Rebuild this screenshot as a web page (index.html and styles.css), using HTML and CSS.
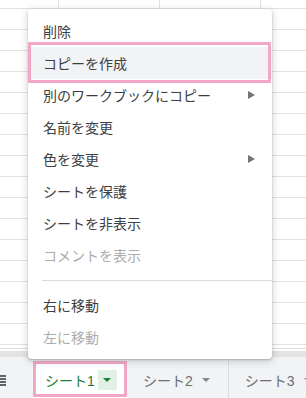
FILE: index.html
```html
<!DOCTYPE html>
<html lang="ja">
<head>
    <meta charset="UTF-8">
    <meta name="viewport" content="width=device-width, initial-scale=1.0">
    <title>シートのメニュー</title>
    <link rel="stylesheet" href="styles.css">
</head>
<body>
    <div class="screen">
        <div class="sheet-grid"></div>
        <div class="scroll-track"></div>

        <div class="tab-bar">
            <div class="all-sheets">
                <svg width="6" height="12" viewBox="0 0 6 12">
                    <rect x="0" y="0" width="6" height="2" fill="#5f6368"/>
                    <rect x="0" y="3" width="6" height="2" fill="#5f6368"/>
                    <rect x="0" y="6" width="6" height="2" fill="#5f6368"/>
                    <rect x="0" y="9" width="6" height="2" fill="#5f6368"/>
                </svg>
            </div>
            <div class="tab active">
                <span class="tab-name">シート1</span>
                <span class="tab-arrow"><span class="caret"></span></span>
                <span class="mark"></span>
            </div>
            <div class="tab">
                <span class="tab-name">シート2</span>
                <span class="tab-arrow"><span class="caret"></span></span>
            </div>
            <div class="tab">
                <span class="tab-name">シート3</span>
                <span class="tab-arrow"><span class="caret"></span></span>
            </div>
        </div>

        <div class="menu">
            <div class="menu-item">削除</div>
            <div class="menu-item hover">コピーを作成<span class="mark"></span></div>
            <div class="menu-item">別のワークブックにコピー<span class="sub"></span></div>
            <div class="menu-item">名前を変更</div>
            <div class="menu-item">色を変更<span class="sub"></span></div>
            <div class="menu-item">シートを保護</div>
            <div class="menu-item">シートを非表示</div>
            <div class="menu-item disabled">コメントを表示</div>
            <div class="menu-sep"></div>
            <div class="menu-item">右に移動</div>
            <div class="menu-item disabled">左に移動</div>
        </div>
    </div>
</body>
</html>
```

FILE: styles.css
```css
body {
    margin: 0;
    font-family: "Liberation Sans", "Noto Sans CJK JP", sans-serif;
}
.screen {
    position: relative;
    width: 306px;
    height: 398px;
    overflow: hidden;
    background: #fff;
}
.sheet-grid {
    height: 348px;
    border-bottom: 1px solid #e2e2e2;
    background-image:
        linear-gradient(#e2e2e2 1px, transparent 1px),
        linear-gradient(90deg, #e2e2e2 1px, transparent 1px);
    background-size: 101px 21px;
    background-position: 58px 8px;
}
.scroll-track {
    height: 6px;
    margin-top: 2px;
    background: #e3e3e3;
}
.tab-bar {
    display: flex;
    height: 37px;
    padding-top: 4px;
    background: #f1f3f4;
    font-size: 14px;
    color: #6a6e72;
}
.all-sheets {
    width: 33px;
    flex-shrink: 0;
    display: flex;
    align-items: center;
    padding-top: 2px;
    box-sizing: border-box;
}
.all-sheets svg {
    display: block;
}
.tab {
    position: relative;
    display: flex;
    align-items: center;
    padding: 0 12px 0 16px;
    border-right: 1px solid #dadce0;
    flex-shrink: 0;
}
.tab.active {
    width: 94px;
    box-sizing: border-box;
    padding: 0 10px 0 12px;
    background: #fff;
    color: #188038;
    border-right: none;
}
.tab-name {
    white-space: nowrap;
}
.tab-arrow {
    width: 20px;
    height: 20px;
    margin-left: 3px;
    display: flex;
    align-items: center;
    justify-content: center;
}
.active .tab-arrow {
    background: #e2f1e5;
}
.caret {
    width: 0;
    height: 0;
    border-left: 4px solid transparent;
    border-right: 4px solid transparent;
    border-top: 4px solid #80868b;
}
.active .caret {
    border-top-color: #188038;
}
.tab.active .mark {
    position: absolute;
    left: 0;
    right: 0;
    top: 0;
    bottom: 1px;
    border: 3px solid #f2a7c6;
}

.menu {
    position: absolute;
    left: 28px;
    top: 9px;
    width: 244px;
    padding: 6px 0;
    background: #fff;
    border-radius: 4px;
    box-shadow: 0 2px 6px 2px rgba(60, 64, 67, 0.15), 0 1px 2px rgba(60, 64, 67, 0.3);
}
.menu-item {
    position: relative;
    display: flex;
    align-items: center;
    height: 32px;
    padding: 0 17px 0 15px;
    font-size: 14px;
    color: #3c4043;
    white-space: nowrap;
}
.menu-item.hover {
    background: #f1f3f4;
}
.menu-item.disabled {
    color: #acacac;
}
.menu-item .mark {
    position: absolute;
    left: 0;
    right: 1px;
    top: -5px;
    bottom: -4px;
    border: 3px solid #f2a7c6;
}
.sub {
    margin-left: auto;
    width: 0;
    height: 0;
    border-top: 4px solid transparent;
    border-bottom: 4px solid transparent;
    border-left: 7px solid #757575;
}
.menu-sep {
    height: 1px;
    margin: 9px 0 8px 14px;
    background: #dadce0;
}
```
